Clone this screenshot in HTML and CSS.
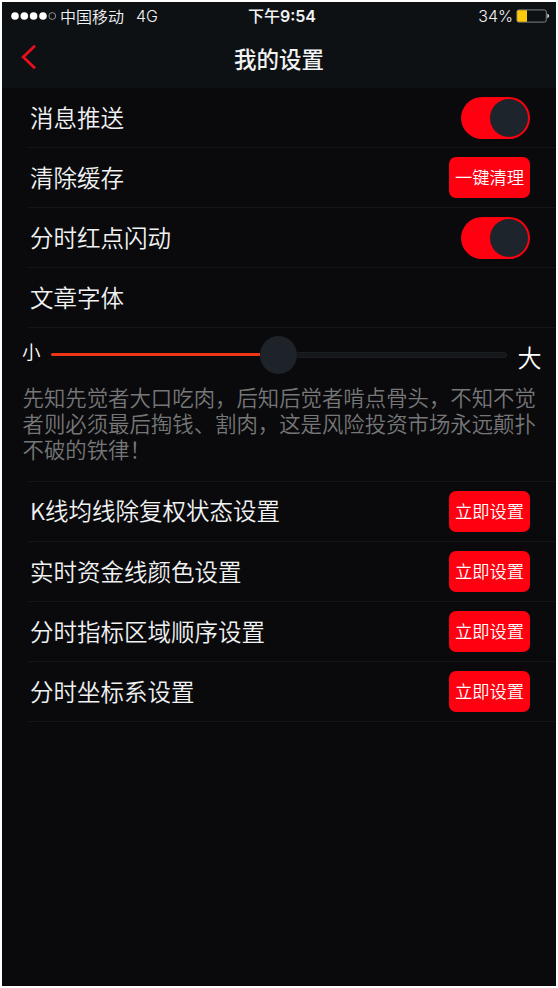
FILE: index.html
```html
<!DOCTYPE html>
<html lang="zh-CN">
<head>
<meta charset="utf-8">
<title>我的设置</title>
<link rel="stylesheet" href="styles.css">
</head>
<body>
<div class="screen">
  <header class="top">
    <div class="status">
      <div class="carrier">
        <svg class="signal" width="46" height="10" viewBox="0 0 46 10"><g fill="#fff"><circle cx="4" cy="5" r="3.8"/><circle cx="13.3" cy="5" r="3.8"/><circle cx="22.6" cy="5" r="3.8"/><circle cx="32" cy="5" r="3.8"/></g><circle cx="41.3" cy="5" r="3.4" fill="none" stroke="#a9abac" stroke-width=".8"/></svg>
        <span class="operator">中国移动</span>
        <span class="network">4G</span>
      </div>
      <div class="clock">下午<b>9:54</b></div>
      <div class="power">
        <span>34%</span>
        <svg width="34" height="14" viewBox="0 0 34 14"><rect x=".9" y=".9" width="29.4" height="12.2" rx="2" fill="none" stroke="#8d8f90" stroke-width=".9"/><path d="M2.4 1.2H11v11.6H2.4Q1.2 12.8 1.2 11.6V2.4Q1.2 1.2 2.4 1.2Z" fill="#fdcb0b"/><path d="M31.3 4.8Q33.2 5.4 33.2 7T31.3 9.2Z" fill="#d5d6d6"/></svg>
      </div>
    </div>
    <nav class="nav">
      <svg class="back" width="16" height="26" viewBox="0 0 16 26"><path d="M14 1.7 2.2 13 14 24.3" fill="none" stroke="#e90f1d" stroke-width="2.8"/></svg>
      <h1>我的设置</h1>
    </nav>
  </header>
  <main>
    <section class="list general">
      <div class="row"><span>消息推送</span><div class="switch"><i></i></div></div>
      <div class="row"><span>清除缓存</span><button>一键清理</button></div>
      <div class="row"><span>分时红点闪动</span><div class="switch"><i></i></div></div>
      <div class="row"><span>文章字体</span></div>
    </section>
    <section class="font-size">
      <div class="slider">
        <span class="small">小</span>
        <div class="track"><div class="fill"></div><div class="thumb"></div><div class="rest"></div></div>
        <span class="large">大</span>
      </div>
      <p>先知先觉者大口吃肉，后知后觉者啃点骨头，不知不觉<br>者则必须最后掏钱、割肉，这是风险投资市场永远颠扑<br>不破的铁律！</p>
    </section>
    <section class="list charts">
      <div class="row"><span>K线均线除复权状态设置</span><button>立即设置</button></div>
      <div class="row"><span>实时资金线颜色设置</span><button>立即设置</button></div>
      <div class="row"><span>分时指标区域顺序设置</span><button>立即设置</button></div>
      <div class="row"><span>分时坐标系设置</span><button>立即设置</button></div>
    </section>
  </main>
</div>
</body>
</html>
```
FILE: styles.css
```css
* { box-sizing: border-box; }
body {
  margin: 0;
  padding: 2px;
  height: 988px;
  background: #fff;
  color: #f1f2f3;
  font-family: "Noto Sans CJK SC", sans-serif;
  font-weight: 350;
}
.screen { height: 984px; background: #0a0a0c; overflow: hidden; }
.top { height: 86px; background: #0e1114; }
.status {
  display: grid;
  grid-template-columns: 1fr auto 1fr;
  align-items: center;
  height: 28px;
  padding: 0 6px 0 9px;
  font-size: 16px;
  line-height: 20px;
}
.carrier, .power { display: flex; align-items: center; }
.operator { margin: -1px 0 0 3px; }
.network { margin-left: 12px; font-family: Inter, sans-serif; }
.clock { font-weight: 500; padding-left: 3px; margin-top: -1px; }
.clock b { font-family: Inter, sans-serif; font-weight: 600; }
.power { justify-content: flex-end; gap: 3px; font-family: Inter, sans-serif; }
.nav {
  display: grid;
  grid-template-columns: 60px 1fr 60px;
  align-items: center;
  height: 56px;
}
.back { margin-left: 19px; margin-top: -2px; }
h1 { margin: 0; text-align: center; font-size: 22.5px; font-weight: 500; line-height: 30px; }
.row {
  display: flex;
  align-items: center;
  justify-content: space-between;
  height: 60.1px;
  margin-left: 26px;
  padding: 0 26px 0 2px;
  border-bottom: 1px solid #151618;
  font-size: 23.5px;
  line-height: 34px;
}
.row span { margin-top: -2px; }
.general button { line-height: 40px; padding-bottom: 2px; }
.charts { margin-top: -1px; }
.charts::before { content: ""; display: block; height: 1px; margin-left: 26px; background: #151618; }
.charts button { padding-bottom: 1px; }
button {
  width: 81px;
  height: 41px;
  padding: 0;
  border: 0;
  border-radius: 7px;
  background: #fe0010;
  color: #fff;
  font: 350 17.3px/24px "Noto Sans CJK SC", sans-serif;
}
.switch {
  display: flex;
  justify-content: flex-end;
  width: 69px;
  height: 42px;
  padding: 2px;
  border-radius: 21px;
  background: #fe0010;
}
.switch i { width: 38px; height: 38px; border-radius: 50%; background: #1e242b; }
.font-size { height: 153.5px; }
.slider { display: flex; align-items: center; height: 53px; padding: 0 14px 0 20px; color: #fff; }
.small { width: 29px; font-size: 18.5px; line-height: 24px; margin-top: -7px; }
.large { margin-left: 10.5px; font-size: 24px; line-height: 30px; margin-top: 5px; }
.track { display: flex; align-items: center; width: 456px; }
.fill { width: 209px; height: 3px; border-radius: 2px 0 0 2px; background: #ee3516; }
.thumb { width: 37px; height: 38px; border-radius: 50%; background: #1e232a; }
.rest { flex: 1; height: 6px; border-radius: 0 3px 3px 0; border: 1px solid #1b1d20; border-left: 0; background: #15181b; }
p { margin: 3px 0 0 20.5px; color: #767778; font-size: 21.4px; line-height: 25.6px; white-space: nowrap; }
```
